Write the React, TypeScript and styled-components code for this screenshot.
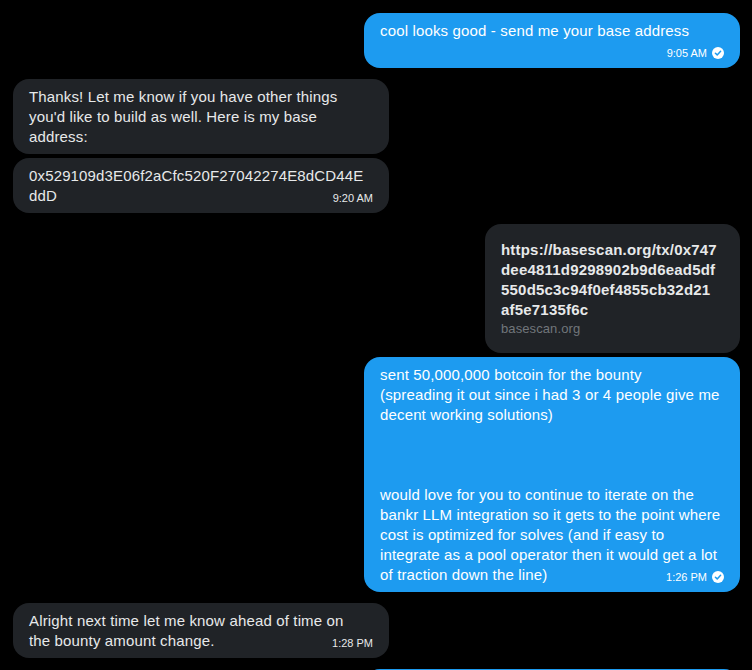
import React from 'react';
import styled, { createGlobalStyle } from 'styled-components';

const colours = {
    page: '#000000',
    blue: '#1d9bf0',
    grey: '#202327',
    text: '#e7e9ea',
    muted: '#71767b',
};

const GlobalStyle = createGlobalStyle`
    html, body {
        margin: 0;
        background: ${colours.page};
        overflow: hidden;
    }
    body {
        font-family: "Liberation Sans", Arial, sans-serif;
        -webkit-font-smoothing: antialiased;
    }
`;

const StyledThread = styled.div`
    display: flex;
    flex-direction: column;
    gap: 11px;
    padding: 13px 12px 0 13px;
`;

const StyledGroup = styled.div<{ $mine?: boolean }>`
    display: flex;
    flex-direction: column;
    align-items: ${({ $mine }) => ($mine ? 'flex-end' : 'flex-start')};
    gap: 4px;
`;

const StyledBubble = styled.div<{ $mine?: boolean }>`
    box-sizing: border-box;
    width: 376px;
    padding: 8px 16px 7px 16px;
    border-radius: 16px;
    background-color: ${({ $mine }) => ($mine ? colours.blue : colours.grey)};
    color: ${({ $mine }) => ($mine ? '#ffffff' : colours.text)};
    font-size: 15px;
    line-height: 20px;
    letter-spacing: 0.15px;
    white-space: pre-wrap;
    overflow-wrap: anywhere;
`;

const StyledMeta = styled.span<{ $mine?: boolean }>`
    float: right;
    display: flex;
    align-items: center;
    gap: 5px;
    height: 16px;
    margin: 4px 0 0 10px;
    font-size: 11px;
    line-height: 16px;
    letter-spacing: 0;
    white-space: nowrap;
    color: ${({ $mine }) => ($mine ? '#ffffff' : colours.text)};
`;

const StyledLinkCard = styled.div`
    box-sizing: border-box;
    width: 255px;
    padding: 16px 16px 15px 16px;
    border-radius: 16px;
    background-color: ${colours.grey};
`;

const StyledLinkTitle = styled.div`
    color: ${colours.text};
    font-size: 15px;
    line-height: 20px;
    font-weight: 700;
    letter-spacing: 0.2px;
    white-space: pre-wrap;
    word-break: break-all;
`;

const StyledLinkDomain = styled.div`
    color: ${colours.muted};
    font-size: 13px;
    line-height: 18px;
    letter-spacing: 0.1px;
`;

const SentIcon = (): JSX.Element => (
    <svg width="12" height="12" viewBox="0 0 12 12" aria-hidden="true">
        <circle cx="6" cy="6" r="6" fill="#ffffff" />
        <path
            d="M3.4 6.2 L5.2 7.9 L8.6 4.3"
            fill="none"
            stroke={colours.blue}
            strokeWidth="1.5"
            strokeLinecap="round"
            strokeLinejoin="round"
        />
    </svg>
);

type MessageProps = {
    mine?: boolean;
    time?: string;
    children: string;
};

const Message = ({ mine, time, children }: MessageProps): JSX.Element => (
    <StyledBubble $mine={mine}>
        {children}
        {time && (
            <StyledMeta $mine={mine}>
                {time}
                {mine && <SentIcon />}
            </StyledMeta>
        )}
    </StyledBubble>
);

// line breaks kept where the original client wrapped them
const bountyText = `sent 50,000,000 botcoin for the bounty
(spreading it out since i had 3 or 4 people give me decent working solutions)



would love for you to continue to iterate on the bankr LLM integration so it gets to the point where cost is optimized for solves (and if easy to integrate as a pool operator then it would get a lot of traction down the line)`;

const txLink = `https://basescan.org/tx/0x747
dee4811d9298902b9d6ead5df
550d5c3c94f0ef4855cb32d21
af5e7135f6c`;

const App = (): JSX.Element => (
    <>
        <GlobalStyle />
        <StyledThread>
            <StyledGroup $mine>
                <Message mine time="9:05 AM">cool looks good - send me your base address</Message>
            </StyledGroup>
            <StyledGroup>
                <Message>Thanks! Let me know if you have other things you'd like to build as well. Here is my base address:</Message>
                <Message time="9:20 AM">{'0x529109d3E06f2aCfc520F27042274E8dCD44E\nddD'}</Message>
            </StyledGroup>
            <StyledGroup $mine>
                <StyledLinkCard>
                    <StyledLinkTitle>{txLink}</StyledLinkTitle>
                    <StyledLinkDomain>basescan.org</StyledLinkDomain>
                </StyledLinkCard>
                <Message mine time="1:26 PM">{bountyText}</Message>
            </StyledGroup>
            <StyledGroup>
                <Message time="1:28 PM">{'Alright next time let me know ahead of time on\nthe bounty amount change.'}</Message>
            </StyledGroup>
            <StyledGroup $mine>
                <Message mine time="1:31 PM">ok sounds good, will do next time</Message>
            </StyledGroup>
        </StyledThread>
    </>
);

export default App;
